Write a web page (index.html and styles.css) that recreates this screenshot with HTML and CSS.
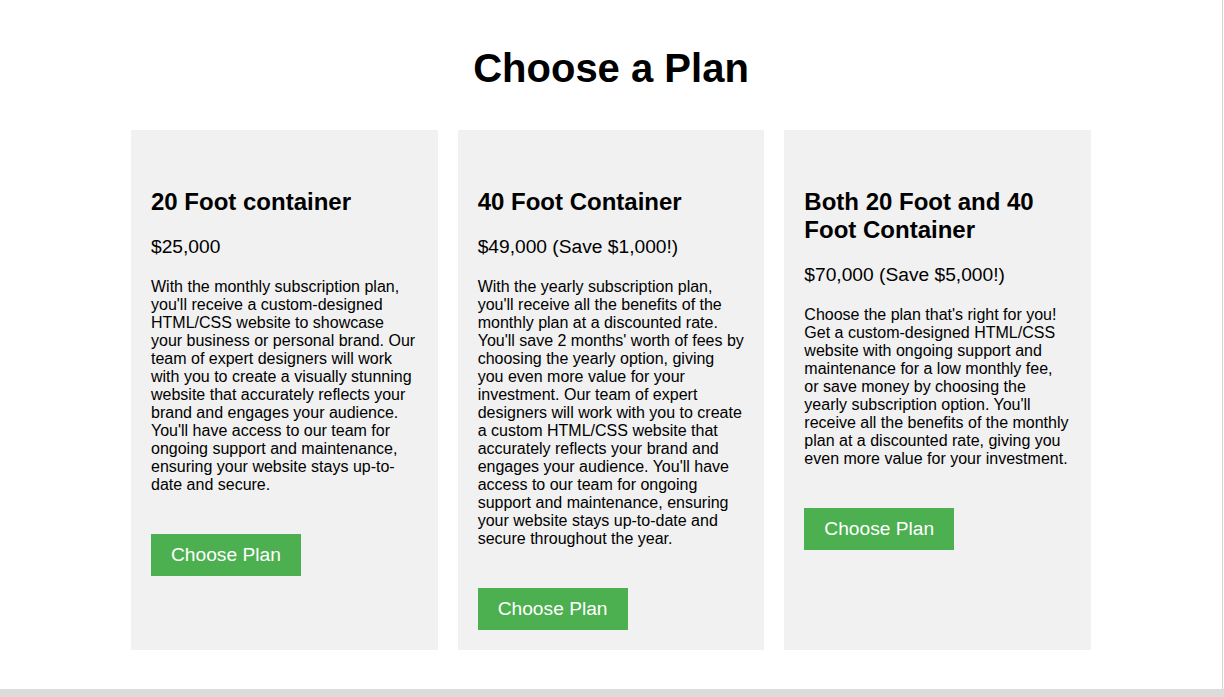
FILE: index.html
```html
<!DOCTYPE html>
<html lang="en">
<head>
<meta charset="utf-8">
<title>Choose a Plan</title>
<link rel="stylesheet" href="styles.css">
</head>
<body>
<div class="frame">
  <div class="page">
    <h1 class="title">Choose a Plan</h1>
    <div class="plans">
      <div class="plan">
        <h2 class="plan-name">20 Foot container</h2>
        <p class="plan-price">$25,000</p>
        <p class="plan-desc">With the monthly subscription plan, you'll receive a custom-designed HTML/CSS website to showcase your business or personal brand. Our team of expert designers will work with you to create a visually stunning website that accurately reflects your brand and engages your audience. You'll have access to our team for ongoing support and maintenance, ensuring your website stays up-to-date and secure.</p>
        <a class="plan-button" href="#">Choose Plan</a>
      </div>
      <div class="plan">
        <h2 class="plan-name">40 Foot Container</h2>
        <p class="plan-price">$49,000 (Save $1,000!)</p>
        <p class="plan-desc">With the yearly subscription plan, you'll receive all the benefits of the monthly plan at a discounted rate. You'll save 2 months' worth of fees by choosing the yearly option, giving you even more value for your investment. Our team of expert designers will work with you to create a custom HTML/CSS website that accurately reflects your brand and engages your audience. You'll have access to our team for ongoing support and maintenance, ensuring your website stays up-to-date and secure throughout the year.</p>
        <a class="plan-button" href="#">Choose Plan</a>
      </div>
      <div class="plan">
        <h2 class="plan-name">Both 20 Foot and 40 Foot Container</h2>
        <p class="plan-price">$70,000 (Save $5,000!)</p>
        <p class="plan-desc">Choose the plan that's right for you! Get a custom-designed HTML/CSS website with ongoing support and maintenance for a low monthly fee, or save money by choosing the yearly subscription option. You'll receive all the benefits of the monthly plan at a discounted rate, giving you even more value for your investment.</p>
        <a class="plan-button" href="#">Choose Plan</a>
      </div>
    </div>
  </div>
</div>
<div class="bottom-bar"></div>
</body>
</html>
```

FILE: styles.css
```css
html, body {
  margin: 0;
  padding: 0;
  background: #ffffff;
}

body {
  font-family: "Liberation Sans", Arial, sans-serif;
  color: #000000;
  overflow: hidden;
}

.frame {
  width: 1222px;
  height: 689px;
  border-right: 1px solid #d4d4d4;
  box-sizing: content-box;
}

.bottom-bar {
  height: 8px;
  background: #dcdcdc;
}

.page {
  width: 960px;
  margin: 0 auto;
  padding-top: 45px;
}

.title {
  margin: 0 0 39px 0;
  font-size: 40px;
  line-height: 46px;
  font-weight: bold;
  text-align: center;
}

.plans {
  display: flex;
  gap: 20px;
}

.plan {
  flex: 1;
  background: #f1f1f1;
  padding: 20px 20px 20px 20px;
  display: flex;
  flex-direction: column;
  align-items: flex-start;
}

.plan-name {
  margin: 38px 0 0 0;
  font-size: 24px;
  line-height: 28px;
  font-weight: bold;
}

.plan-price {
  margin: 20px 0 0 0;
  font-size: 19.2px;
  line-height: 22px;
}

.plan-desc {
  margin: 20px 0 0 0;
  font-size: 16px;
  line-height: 18px;
}

.plan-button {
  margin-top: 40px;
  display: inline-block;
  background: #4caf50;
  color: #ffffff;
  text-decoration: none;
  font-size: 19.2px;
  line-height: 22px;
  padding: 10px 20px;
}
```
